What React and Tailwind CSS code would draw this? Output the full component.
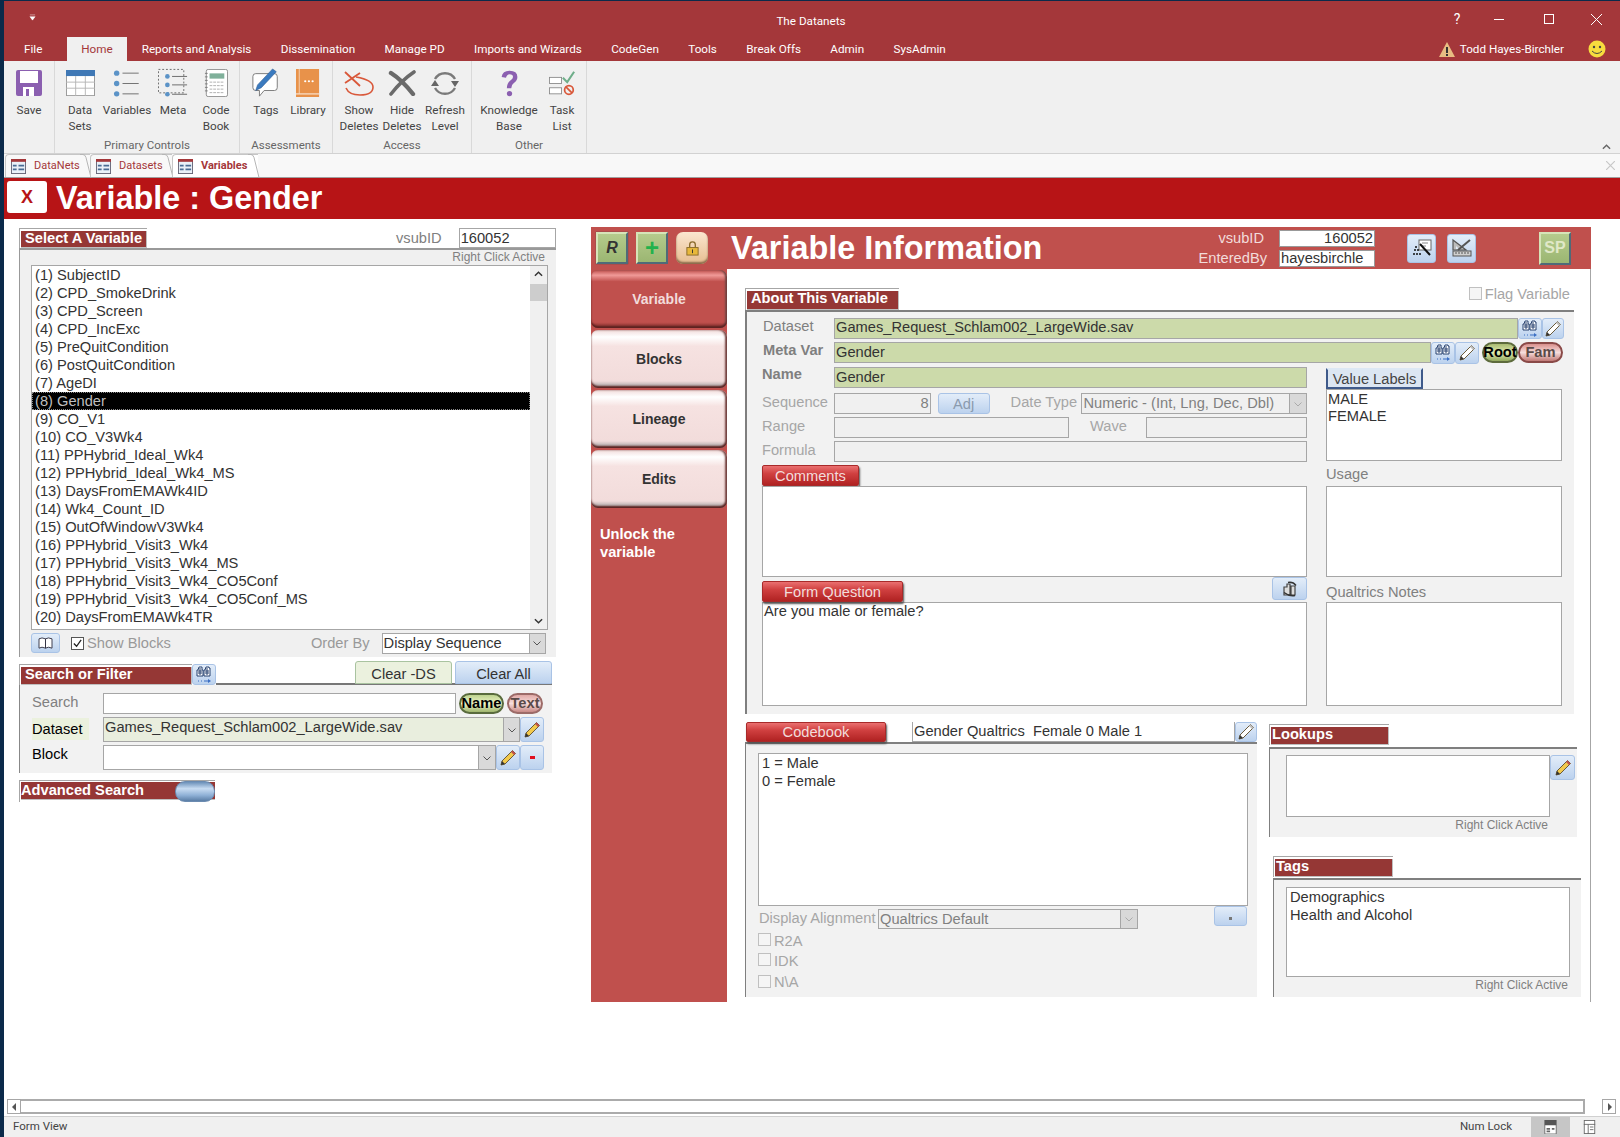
import React from "react";

const Bino = ({ className = "w-[18px] h-[18px]" }) => (
  <svg viewBox="0 0 18 18" className={className}>
    <path d="M4 1h3v3h1v6H2V4h1zM11 1h3v1h1v8H9V4h1z" fill="#fff" stroke="#26406e" strokeWidth="1" />
    <path d="M3 5h4M3 7h4M10 5h4M10 7h4M5 2v7M12 2v7" stroke="#26406e" strokeWidth="1" />
    <path d="M3 15h1M6 15h1M9 15h5" stroke="#3b6fc4" strokeWidth="1" />
    <path d="M13 13l3 2-3 2z" fill="#3b6fc4" />
  </svg>
);
const Pencil = ({ color = "#f2c94c", tip = "#c0504d", className = "w-[18px] h-[18px]" }) => (
  <svg viewBox="0 0 18 18" className={className}>
    <path d="M13.5 1.5l3 3L6 15l-4 1 1-4z" fill={color} stroke="#6a5a3a" strokeWidth="1" />
    <path d="M13.5 1.5l3 3-1.5 1.5-3-3z" fill={tip} />
    <path d="M3 12l3 3-4 1z" fill="#333" />
  </svg>
);
const GrayPencil = ({ className }) => <Pencil color="#ffffff" tip="#bfbfbf" className={className} />;
const Chev = ({ color = "#555" }) => (
  <svg viewBox="0 0 10 10" className="w-[10px] h-[10px]">
    <path d="M1.5 3.5L5 7l3.5-3.5" fill="none" stroke={color} strokeWidth="1" />
  </svg>
);
const BlueBtn = ({ className = "", children }) => (
  <div className={"flex items-center justify-center rounded-[3px] border border-[#a9c3e6] bg-linear-to-b from-[#e3edf9] to-[#bcd2ee] " + className}>
    {children}
  </div>
);
const Field = ({ className = "", children }) => (
  <div className={"border border-[#a6a6a6] overflow-hidden whitespace-nowrap px-[1px] " + className}>{children}</div>
);
const Arrow = ({ className = "", color }) => (
  <div className={"flex shrink-0 items-center justify-center bg-[#d9d9d9] border-l border-[#a6a6a6] " + className}>
    <Chev color={color} />
  </div>
);
const Title = ({ className = "", tpl = "pl-[4px]", children }) => (
  <div className={"shrink-0 border-t border-l border-[#a6a6a6] pt-[2px] pl-[1px] " + className}>
    <div className={"h-full bg-[#953735] text-white font-bold text-[14.67px] leading-[14px] border-r border-b border-[#bfbfbf] whitespace-nowrap " + tpl}>{children}</div>
  </div>
);
const RedBtn = ({ className = "", children }) => (
  <div className={"flex items-center justify-center rounded-[2px] text-[#f2dcdb] text-[14.67px] border border-[#a82a2a] bg-[linear-gradient(#ea7070,#d04040_40%,#b02222)] shadow-[1px_2px_2px_#555] " + className}>
    {children}
  </div>
);
const Pill = ({ className = "", children }) => (
  <div className={"flex items-center justify-center rounded-full font-bold text-[14.67px] leading-none border-2 " + className}>{children}</div>
);
const Check = ({ checked, className = "" }) => (
  <div className={"shrink-0 w-[13px] h-[13px] border flex items-center justify-center " + className}>
    {checked && (
      <svg viewBox="0 0 12 12" className="w-[11px] h-[11px]">
        <path d="M2 6l3 3 5-7" fill="none" stroke="#222" strokeWidth="1.4" />
      </svg>
    )}
  </div>
);

const RI = {
  save: (
    <svg viewBox="0 0 26 26" className="w-[26px] h-[26px]">
      <path d="M0 2q0-2 2-2h22q2 0 2 2v22q0 2-2 2H2q-2 0-2-2z" fill="#8b5fb0" />
      <rect x="4" y="1" width="18" height="12" fill="#fff" />
      <rect x="7" y="17" width="11" height="9" fill="#fff" />
      <rect x="10" y="19" width="3" height="7" fill="#8b5fb0" />
    </svg>
  ),
  table: (
    <svg viewBox="0 0 30 30" className="w-[29px] h-[26px]" preserveAspectRatio="none">
      <rect x="0.5" y="0.5" width="29" height="29" fill="#fff" stroke="#999" />
      <rect x="0" y="0" width="30" height="7" fill="#3f78b5" />
      <path d="M0 14h30M0 21h30M10 7v23M20 7v23" stroke="#b3b3b3" />
    </svg>
  ),
  list: (
    <svg viewBox="0 0 30 30" className="w-[28px] h-[27px]">
      <circle cx="3.5" cy="3.5" r="3" fill="#5b93c7" />
      <circle cx="3.5" cy="15" r="3" fill="#5b93c7" />
      <circle cx="3.5" cy="26.5" r="3" fill="#5b93c7" />
      <path d="M10 3.5h18M10 15h18M10 26.5h18" stroke="#666" />
    </svg>
  ),
  meta: (
    <svg viewBox="0 0 32 32" className="w-[30px] h-[30px]">
      <rect x="0.5" y="1.5" width="27" height="25" fill="none" stroke="#666" strokeDasharray="2 2" />
      <circle cx="10" cy="9" r="2.5" fill="#5b93c7" />
      <circle cx="10" cy="18" r="2.5" fill="#5b93c7" />
      <circle cx="10" cy="28" r="2.5" fill="#5b93c7" />
      <path d="M15 9h16M15 18h16M15 28h16" stroke="#666" />
    </svg>
  ),
  book: (
    <svg viewBox="0 0 26 32" className="w-[24px] h-[28px]" preserveAspectRatio="none">
      <rect x="2.5" y="0.5" width="23" height="31" rx="2" fill="#fff" stroke="#888" />
      <path d="M1 5h3M1 9h3M1 13h3M1 17h3M1 21h3M1 25h3" stroke="#777" />
      <rect x="6" y="5" width="16" height="6" fill="#7fb09a" />
      <path d="M6 15h16M6 19h16M6 23h16M6 27h16" stroke="#aaa" strokeDasharray="3 1" />
    </svg>
  ),
  tags: (
    <svg viewBox="0 0 32 32" className="w-[30px] h-[30px]">
      <path d="M5 6h20q3 0 3 3v12q0 3-3 3H14l-5 6v-6H5q-3 0-3-3V9q0-3 3-3z" fill="#fff" stroke="#777" />
      <path d="M23 1l4 3L11 21l-6 3 2-6z" fill="#3a7abf" stroke="#2a5a90" strokeWidth="0.6" />
    </svg>
  ),
  lib: (
    <svg viewBox="0 0 26 32" className="w-[24px] h-[28px]" preserveAspectRatio="none">
      <rect x="0" y="0" width="25" height="32" fill="#e8924a" />
      <rect x="3" y="0" width="1" height="28" fill="#fff" opacity="0.6" />
      <rect x="0" y="28" width="25" height="1" fill="#fff" />
      <circle cx="10" cy="14" r="1.2" fill="#fff" />
      <circle cx="14" cy="14" r="1.2" fill="#fff" />
      <circle cx="18" cy="14" r="1.2" fill="#fff" />
    </svg>
  ),
  show: (
    <svg viewBox="0 0 30 25" className="w-[30px] h-[25px]">
      <path d="M1 1l15 14M16 2L1 12" stroke="#d9583a" strokeWidth="1.8" fill="none" />
      <path d="M12 6Q29 9 29 16 29 24 16 24 5 24 2 17" stroke="#d9583a" strokeWidth="1.6" fill="none" />
    </svg>
  ),
  hide: (
    <svg viewBox="0 0 28 26" className="w-[28px] h-[26px]">
      <path d="M3 3Q14 10 25 24" stroke="#6a6a6a" strokeWidth="4.4" strokeLinecap="round" fill="none" />
      <path d="M26 2Q14 10 3 24" stroke="#6a6a6a" strokeWidth="3.6" strokeLinecap="round" fill="none" />
    </svg>
  ),
  refresh: (
    <svg viewBox="0 0 32 28" className="w-[32px] h-[28px]">
      <path d="M6 10a11.5 11.5 0 0 1 20 0" stroke="#7a7a7a" strokeWidth="2.4" fill="none" />
      <path d="M26 19a11.5 11.5 0 0 1-20 0" stroke="#7a7a7a" strokeWidth="2.4" fill="none" />
      <path d="M22 12l8 0-4 6zM2 17l8 0-4-6z" fill="#666" />
    </svg>
  ),
  help: (
    <svg viewBox="0 0 24 32" className="w-[21px] h-[28px]">
      <path d="M3 9q1-7 9-7 9 0 9 7 0 4-4 7-3 2-3 6h-5q0-6 4-9 3-2 3-4 0-3-4-3-3 0-4 4z" fill="#8b5fb0" />
      <circle cx="12" cy="28" r="3" fill="#8b5fb0" />
    </svg>
  ),
  task: (
    <svg viewBox="0 0 30 30" className="w-[28px] h-[26px]">
      <rect x="0.5" y="8.5" width="14" height="7" fill="#fff" stroke="#888" />
      <rect x="0.5" y="20.5" width="14" height="7" fill="#fff" stroke="#888" />
      <path d="M16 9l5 5 8-12" stroke="#6fae8a" strokeWidth="2.4" fill="none" />
      <circle cx="23" cy="23" r="5" fill="none" stroke="#d9583a" strokeWidth="2" />
      <path d="M19.5 19.5l7 7" stroke="#d9583a" strokeWidth="2" />
    </svg>
  ),
};

const RBtn = ({ w, icon, l1, l2 }) => (
  <div className={"flex flex-col items-center shrink-0 " + w}>
    <div className="flex items-center justify-center h-[40px] mt-[2px] -mb-[1px]">{icon}</div>
    <div className="text-center leading-[16px] whitespace-nowrap">
      {l1}
      <br />
      {l2 || "\u00a0"}
    </div>
  </div>
);
const RGroup = ({ w, pl, label, children }) => (
  <div className={"relative shrink-0 h-full border-r border-[#d9d9d9] " + w}>
    <div className={"flex " + pl}>{children}</div>
    <div className="absolute bottom-[1px] left-0 right-0 text-center text-[#666] text-[11.5px] leading-[14px] whitespace-nowrap">{label}</div>
  </div>
);
const MenuTab = ({ children }) => <div className="px-[14.7px] whitespace-nowrap">{children}</div>;
const DocIcon = () => (
  <svg viewBox="0 0 16 16" className="w-[15px] h-[15px] shrink-0">
    <rect x="0.5" y="0.5" width="15" height="15" fill="#eaf1f8" stroke="#667" />
    <rect x="0" y="0" width="16" height="3" fill="#a4373a" />
    <path d="M2 6h4v2H2zM2 10h4v2H2zM8 6h6v2H8zM8 10h6v2H8z" fill="#4a6c93" />
  </svg>
);
const DocTab = ({ w, bold, children }) => (
  <div className={"relative flex items-center gap-[8px] pl-[5px] h-[23px] border-l border-t border-[#c6c6c6] rounded-tl-[4px] text-[#a4373a] text-[11px] " + w + (bold ? " bg-white font-bold" : " bg-[#f8f8f8]")}>
    <DocIcon />
    <span>{children}</span>
    <svg viewBox="0 0 12 24" className="absolute right-[-2px] top-[-1px] w-[12px] h-[24px]" preserveAspectRatio="none">
      <path d="M0 .5h3q2 0 3 3l5 20" fill="none" stroke="#b5b5b5" />
    </svg>
  </div>
);

const vars = [
  "SubjectID","CPD_SmokeDrink","CPD_Screen","CPD_IncExc","PreQuitCondition","PostQuitCondition","AgeDI","Gender","CO_V1","CO_V3Wk4",
  "PPHybrid_Ideal_Wk4","PPHybrid_Ideal_Wk4_MS","DaysFromEMAWk4ID","Wk4_Count_ID","OutOfWindowV3Wk4","PPHybrid_Visit3_Wk4","PPHybrid_Visit3_Wk4_MS","PPHybrid_Visit3_Wk4_CO5Conf","PPHybrid_Visit3_Wk4_CO5Conf_MS","DaysFromEMAWk4TR",
];

const SideTab = ({ active, children }) => (
  <div
    className={
      "flex h-[58px] items-center justify-center rounded-[7px] font-bold text-[14px] shadow-[inset_0_-2px_2px_#5b2220,inset_-2px_0_2px_#7a4a48] " +
      (active
        ? "text-[#f2dcdb] bg-[linear-gradient(#c0504d_0,#f09a98_9%,#c0504d_20%,#c0504d_90%,#7d2c2a_100%)]"
        : "text-[#333] bg-[linear-gradient(#f2dcdb_0,#ffffff_12%,#f6e2e1_28%,#f2dcdb_88%,#999_100%)]")
    }
  >
    {children}
  </div>
);

export default function App() {
  return (
    <div className="w-[1620px] h-[1137px] overflow-hidden bg-white flex flex-col border-l-4 border-t border-[#0b2a4a] font-['Liberation_Sans',Arial,sans-serif] text-[14.67px] text-[#333] leading-[18px]">
      {/* Title bar */}
      <div className="h-[36px] shrink-0 bg-[#a4373a] text-white relative flex items-center justify-center font-['Roboto',sans-serif] text-[11.7px] pt-[3px]">
        <span className="ml-[-2px]">The Datanets</span>
        <div className="absolute left-[25px] top-[13px]">
          <svg viewBox="0 0 8 8" className="w-[7px] h-[7px]"><path d="M1 1h6M1 3h6l-3 4z" fill="#fff" stroke="#fff" strokeWidth="0.5" /></svg>
        </div>
        <div className="absolute right-[4px] top-[8px] flex items-center h-[20px]">
          <span className="w-[38px] text-center text-[14px]">?</span>
          <span className="w-[46px] flex justify-center"><span className="w-[10px] h-[1px] bg-white" /></span>
          <span className="w-[54px] flex justify-center"><span className="w-[10px] h-[10px] border border-white" /></span>
          <span className="w-[40px] flex justify-center">
            <svg viewBox="0 0 11 11" className="w-[11px] h-[11px]"><path d="M0 0l11 11M11 0L0 11" stroke="#fff" /></svg>
          </span>
        </div>
      </div>
      {/* Menu */}
      <div className="h-[24px] shrink-0 bg-[#a4373a] text-white flex items-center font-['Roboto',sans-serif] text-[11.7px]">
        <div className="w-[63px] pl-[20px]">File</div>
        <div className="w-[60px] h-full bg-[#f0f0f0] text-[#a4373a] flex items-center justify-center">Home</div>
        <MenuTab>Reports and Analysis</MenuTab>
        <MenuTab>Dissemination</MenuTab>
        <MenuTab>Manage PD</MenuTab>
        <MenuTab>Imports and Wizards</MenuTab>
        <MenuTab>CodeGen</MenuTab>
        <MenuTab>Tools</MenuTab>
        <MenuTab>Break Offs</MenuTab>
        <MenuTab>Admin</MenuTab>
        <MenuTab>SysAdmin</MenuTab>
        <div className="ml-auto flex items-center pr-[14px]">
          <svg viewBox="0 0 16 15" className="w-[16px] h-[15px]">
            <path d="M8 0l8 15H0z" fill="#e8bd82" />
            <path d="M7 5h2v6H7zM7 12h2v2H7z" fill="#333" />
          </svg>
          <span className="ml-[5px]">Todd Hayes-Birchler</span>
          <svg viewBox="0 0 18 18" className="ml-[24px] w-[18px] h-[18px]">
            <circle cx="9" cy="9" r="8.5" fill="#f7dc3e" />
            <circle cx="6" cy="7" r="1.2" fill="#444" />
            <circle cx="12" cy="7" r="1.2" fill="#444" />
            <path d="M4 11q5 5 10 0" fill="none" stroke="#444" />
          </svg>
        </div>
      </div>
      {/* Ribbon */}
      <div className="h-[93px] shrink-0 bg-[#f0f0f0] border-b border-[#d2d2d2] flex font-['Roboto',sans-serif] text-[11.7px] text-[#444] relative">
        <RGroup w="w-[51px]" pl="pl-[1px]" label="">
          <RBtn w="w-[48px]" icon={RI.save} l1="Save" />
        </RGroup>
        <RGroup w="w-[185px]" pl="pl-[1px]" label="Primary Controls">
          <RBtn w="w-[48px]" icon={RI.table} l1="Data" l2="Sets" />
          <RBtn w="w-[46px]" icon={RI.list} l1="Variables" />
          <RBtn w="w-[46px]" icon={RI.meta} l1="Meta" />
          <RBtn w="w-[40px]" icon={RI.book} l1="Code" l2="Book" />
        </RGroup>
        <RGroup w="w-[93px]" pl="pl-[4px]" label="Assessments">
          <RBtn w="w-[44px]" icon={RI.tags} l1="Tags" />
          <RBtn w="w-[40px]" icon={RI.lib} l1="Library" />
        </RGroup>
        <RGroup w="w-[139px]" pl="pl-[5px]" label="Access">
          <RBtn w="w-[42px]" icon={RI.show} l1="Show" l2="Deletes" />
          <RBtn w="w-[44px]" icon={RI.hide} l1="Hide" l2="Deletes" />
          <RBtn w="w-[42px]" icon={RI.refresh} l1="Refresh" l2="Level" />
        </RGroup>
        <RGroup w="w-[115px]" pl="pl-[9px]" label="Other">
          <RBtn w="w-[56px]" icon={RI.help} l1="Knowledge" l2="Base" />
          <RBtn w="w-[50px]" icon={RI.task} l1="Task" l2="List" />
        </RGroup>
        <div className="absolute right-[9px] bottom-[3px]">
          <svg viewBox="0 0 10 6" className="w-[9px] h-[6px]"><path d="M1 5l4-4 4 4" fill="none" stroke="#666" strokeWidth="1.6" /></svg>
        </div>
      </div>
      {/* Doc tabs */}
      <div className="h-[24px] shrink-0 bg-[#f8f8f8] border-b border-[#a0a0a0] flex items-start font-['Roboto',sans-serif] pl-[1px] relative">
        <DocTab w="w-[85px]">DataNets</DocTab>
        <DocTab w="w-[82px]">Datasets</DocTab>
        <DocTab w="w-[86px]" bold>Variables</DocTab>
        <div className="absolute right-[5px] top-[7px]">
          <svg viewBox="0 0 9 9" className="w-[9px] h-[9px]"><path d="M0 0l9 9M9 0L0 9" stroke="#c8c8c8" strokeWidth="1.2" /></svg>
        </div>
      </div>
      {/* Red band */}
      <div className="h-[41px] shrink-0 bg-[#b71416] flex items-start pl-[3px] pt-[3px]">
        <div className="w-[40px] h-[32px] bg-white rounded-[3px] flex items-center justify-center text-[#b71416] font-bold text-[18px]">X</div>
        <div className="ml-[9px] -mt-[1px] text-white font-bold text-[32.4px] leading-[36px]">Variable : Gender</div>
      </div>
      {/* Main */}
      <div className="flex-1 min-h-0 flex">
        {/* Left column */}
        <div className="w-[587px] shrink-0 pl-[15px] pt-[9px]">
          <div className="flex items-center h-[20px] w-[537px]">
            <Title className="w-[128px] h-[20px]">Select A Variable</Title>
            <div className="ml-[249px] text-[#808080]">vsubID</div>
            <Field className="ml-[17px] w-[97px] h-[20px] bg-white text-[#333] leading-[18px]">160052</Field>
          </div>
          <div className="w-[537px] h-[409px] bg-[#f0f0f0] border-t-2 border-l border-[#999] flex flex-col">
            <div className="h-[15px] shrink-0 text-right pr-[11px] text-[#808080] text-[12px] leading-[14px]">Right Click Active</div>
            <div className="ml-[11px] w-[517px] h-[365px] shrink-0 bg-white border border-[#a6a6a6] flex">
              <div className="flex-1 min-w-0">
                {vars.map((v, i) => (
                  <div key={v} className={"h-[18px] pl-[3px] leading-[18px] whitespace-nowrap" + (i === 7 ? " bg-black text-[#bfbfbf] outline-1 outline-dotted outline-[#888] -outline-offset-1" : "")}>
                    ({i + 1}) {v}
                  </div>
                ))}
              </div>
              <div className="w-[17px] shrink-0 bg-[#f0f0f0] flex flex-col items-center justify-between py-[5px] relative">
                <svg viewBox="0 0 10 6" className="w-[9px] h-[6px]"><path d="M1 5l4-4 4 4" fill="none" stroke="#333" strokeWidth="1.6" /></svg>
                <div className="absolute left-0 right-0 top-[18px] h-[17px] bg-[#cdcdcd]" />
                <svg viewBox="0 0 10 6" className="w-[9px] h-[6px]"><path d="M1 1l4 4 4-4" fill="none" stroke="#333" strokeWidth="1.6" /></svg>
              </div>
            </div>
            <div className="flex items-center h-[22px] mt-[2px] ml-[11px] w-[517px]">
              <BlueBtn className="w-[29px] h-[20px]">
                <svg viewBox="0 0 16 14" className="w-[15px] h-[13px]"><path d="M1 2q3-2 7 0v10q-4-2-7 0zM8 2q3-2 7 0v10q-4-2-7 0z" fill="#fff" stroke="#334" /></svg>
              </BlueBtn>
              <Check checked className="ml-[11px] bg-white border-[#555]" />
              <span className="ml-[3px] text-[#999]">Show Blocks</span>
              <span className="ml-[140px] text-[#999]">Order By</span>
              <div className="ml-[12px] w-[164px] h-[21px] border border-[#a6a6a6] bg-white flex">
                <div className="flex-1 px-[1px] leading-[19px] whitespace-nowrap">Display Sequence</div>
                <Arrow className="w-[16px]" />
              </div>
            </div>
          </div>

          {/* Search */}
          <div className="mt-[4px] flex items-end h-[24px] w-[533px]">
            <Title className="w-[173px] h-[21px]">Search or Filter</Title>
            <BlueBtn className="w-[24px] h-[21px] shrink-0"><Bino /></BlueBtn>
            <div className="flex-1 h-full border-b-2 border-[#777] flex items-start justify-end gap-[3px]">
              <div className="w-[97px] h-[23px] rounded-t-[3px] border border-[#a9c3a0] bg-[#ebf1de] flex items-center justify-center text-[#333] pt-[2px]">Clear -DS</div>
              <div className="w-[97px] h-[23px] rounded-t-[3px] border border-[#a9c3e6] bg-linear-to-b from-[#e3edf9] to-[#bcd2ee] flex items-center justify-center text-[#333] pt-[2px]">Clear All</div>
            </div>
          </div>
          <div className="w-[533px] h-[88px] bg-[#f2f2f2] border-l border-[#888] pl-[12px] pt-[8px]">
            <div className="flex h-[20px]">
              <div className="w-[71px] text-[#808080]">Search</div>
              <Field className="w-[353px] h-[21px] bg-white" />
              <Pill className="ml-[3px] w-[45px] h-[21px] border-[#596b3d] text-black bg-linear-to-b from-[#bcd28e] via-[#f0f5c8] to-[#9fb56d]">Name</Pill>
              <Pill className="ml-[3px] w-[36px] h-[21px] border-[#9c6b68] text-[#5a4a48] bg-linear-to-b from-[#e0a9a6] via-[#f6dedd] to-[#c88986]">Text</Pill>
            </div>
            <div className="flex mt-[4px] h-[25px]">
              <div className="w-[71px]"><div className="w-[57px] h-[22px] bg-[#ebf1de] text-black mt-[1px] leading-[22px]">Dataset</div></div>
              <div className="w-[417px] h-[25px] border border-[#a6a6a6] bg-[#e9eede] flex">
                <div className="flex-1 px-[1px] whitespace-nowrap">Games_Request_Schlam002_LargeWide.sav</div>
                <Arrow className="w-[16px]" />
              </div>
              <BlueBtn className="w-[24px] h-[25px]"><Pencil /></BlueBtn>
            </div>
            <div className="flex mt-[3px] h-[25px]">
              <div className="w-[71px] text-black">Block</div>
              <div className="w-[393px] h-[25px] border border-[#a6a6a6] bg-white flex justify-end">
                <Arrow className="w-[17px]" />
              </div>
              <BlueBtn className="w-[24px] h-[25px]"><Pencil /></BlueBtn>
              <BlueBtn className="w-[24px] h-[25px]"><span className="w-[5px] h-[3px] bg-[#e01020]" /></BlueBtn>
            </div>
          </div>
          <div className="mt-[7px] w-[196px] h-[22px] border-t border-l border-[#a6a6a6] pt-[1px] pl-[1px]">
            <div className="h-[18px] bg-[#953735] text-white font-bold text-[14.67px] leading-[17px] flex justify-between border-b border-[#bfbfbf]">
              <span>Advanced Search</span>
              <div className="w-[40px] h-[21px] -mt-[1px] rounded-[10px] border border-[#6b8bb0] bg-[linear-gradient(#6a8fb8,#c8dcf2_35%,#8fb0d6_70%,#5a7da5)]" />
            </div>
          </div>
        </div>

        {/* Right column */}
        <div className="pt-[8px] shrink-0">
          <div className="h-[42px] w-[1000px] bg-[#c0504d] flex items-center pl-[5px] text-white">
            <div className="w-[32px] h-[32px] flex items-center justify-center font-bold italic text-[#333] text-[16px] border-2 border-t-[#d6e4b8] border-l-[#d6e4b8] border-r-[#4f6a78] border-b-[#4f6a78] bg-linear-to-b from-[#b5cb8c] to-[#9bb672] shadow-[0_0_1px_#444]">R</div>
            <div className="ml-[8px] w-[32px] h-[32px] flex items-center justify-center font-bold text-[#22b24c] text-[24px] border-2 border-t-[#d6e4b8] border-l-[#d6e4b8] border-r-[#4f6a78] border-b-[#4f6a78] bg-linear-to-b from-[#b5cb8c] to-[#9bb672]">+</div>
            <div className="ml-[8px] w-[32px] h-[32px] flex items-center justify-center rounded-[7px] bg-linear-to-b from-[#fbe6cf] to-[#e6bd90] shadow-[inset_0_-2px_2px_#8a6a4a]">
              <svg viewBox="0 0 16 16" className="w-[15px] h-[15px]">
                <path d="M5 7V4q0-3 3-3t3 3v3" fill="none" stroke="#8a6a2a" strokeWidth="1.4" />
                <rect x="2" y="7" width="12" height="8" fill="#e8b83a" stroke="#8a6a2a" />
                <path d="M8 9v4" stroke="#333" />
              </svg>
            </div>
            <div className="ml-[23px] w-[492px] font-bold text-[32.4px] leading-none whitespace-nowrap">Variable Information</div>
            <div className="w-[41px] flex flex-col items-end text-[#f2dcdb] leading-[20px]">
              <div className="whitespace-nowrap">vsubID</div>
              <div className="whitespace-nowrap -mr-[3px]">EnteredBy</div>
            </div>
            <div className="ml-[15px] flex flex-col gap-[3px]">
              <div className="w-[96px] h-[17px] bg-white border border-[#999] text-right text-[#333] leading-[15px] pr-[1px]">160052</div>
              <div className="w-[96px] h-[17px] bg-white border border-[#999] text-[#333] leading-[14px] overflow-hidden pl-[1px]">hayesbirchle</div>
            </div>
            <BlueBtn className="ml-[32px] w-[29px] h-[29px]">
              <svg viewBox="0 0 20 20" className="w-[20px] h-[20px]">
                <rect x="7" y="2" width="12" height="10" fill="#fff" stroke="#666" />
                <path d="M10 5h6M10 8h4" stroke="#888" />
                <path d="M8 6l10 11" stroke="#111" strokeWidth="2" />
                <path d="M3 9h2M2 12h2M5 12h2M1 16h2M4 16h2M7 16h2" stroke="#111" strokeWidth="1.6" />
              </svg>
            </BlueBtn>
            <BlueBtn className="ml-[11px] w-[29px] h-[29px]">
              <svg viewBox="0 0 22 20" className="w-[22px] h-[20px]">
                <path d="M2 2l13 10H2z" fill="#bcbcbc" stroke="#555" strokeWidth="1.2" />
                <path d="M5 8l3 3H5z" fill="#e3edf9" />
                <path d="M7 12L19 2" stroke="#555" strokeWidth="2" />
                <rect x="2" y="13" width="18" height="5" fill="#d0d0d0" stroke="#555" />
                <path d="M5 14v2M8 14v2M11 14v2M14 14v2M17 14v2" stroke="#555" />
              </svg>
            </BlueBtn>
            <div className="ml-[63px] w-[32px] h-[33px] flex items-center justify-center font-bold text-[#e0e8c8] text-[16px] border-2 border-t-[#d6e4b8] border-l-[#d6e4b8] border-r-[#4f6a78] border-b-[#4f6a78] bg-linear-to-b from-[#b5cb8c] to-[#9bb672]">SP</div>
          </div>
          <div className="flex w-[1000px] h-[733px]">
            {/* Sidebar */}
            <div className="w-[136px] shrink-0 h-full bg-[#c0504d] pt-[1px]">
              <div className="flex flex-col gap-[2px]">
                <SideTab active>Variable</SideTab>
                <SideTab>Blocks</SideTab>
                <SideTab>Lineage</SideTab>
                <SideTab>Edits</SideTab>
              </div>
              <div className="mt-[17px] ml-[9px] text-white font-bold text-[14.67px] leading-[18px]">Unlock the<br />variable</div>
            </div>
            {/* Content */}
            <div className="w-[864px] border-r border-[#a6a6a6] pl-[18px] pt-[19px]">
              <div className="flex items-center h-[21px] w-[829px]">
                <Title className="w-[154px] h-[22px]">About This Variable</Title>
                <div className="ml-auto flex items-center text-[#a6a6a6] pr-[4px] -mt-[10px]">
                  <Check className="bg-[#f5f5f5] border-[#c0c0c0]" />
                  <span className="ml-[3px]">Flag Variable</span>
                </div>
              </div>
              <div className="w-[829px] h-[404px] mt-[1px] bg-[#f2f2f2] border-t-2 border-l-2 border-[#7f7f7f] pt-[6px] pl-[16px]">
                <div className="flex h-[21px]">
                  <div className="w-[71px] text-[#808080] -mt-[1px]">Dataset</div>
                  <Field className="w-[684px] h-[21px] bg-[#ccdaaa] leading-[17px]">Games_Request_Schlam002_LargeWide.sav</Field>
                  <BlueBtn className="w-[24px] h-[21px]"><Bino /></BlueBtn>
                  <BlueBtn className="w-[22px] h-[21px]"><GrayPencil /></BlueBtn>
                </div>
                <div className="flex h-[22px] mt-[3px]">
                  <div className="w-[71px] text-[#7f7f7f] font-bold -mt-[1px]">Meta Var</div>
                  <Field className="w-[597px] h-[21px] bg-[#ccdaaa] leading-[18px]">Gender</Field>
                  <BlueBtn className="w-[24px] h-[22px]"><Bino /></BlueBtn>
                  <BlueBtn className="w-[24px] h-[22px]"><GrayPencil /></BlueBtn>
                  <Pill className="ml-[3px] w-[36px] h-[21px] border-[#5d6b3d] text-black bg-linear-to-b from-[#a9bb72] via-[#e2ecb0] to-[#93a85e]">Root</Pill>
                  <Pill className="w-[45px] h-[21px] border-[#8a4a48] text-[#5a4a48] bg-linear-to-b from-[#d8908d] via-[#f6dedd] to-[#c07a77]">Fam</Pill>
                </div>
                <div className="flex mt-[3px]">
                  {/* form left */}
                  <div className="w-[545px] shrink-0 -ml-[1px]">
                    <div className="flex h-[21px]">
                      <div className="w-[72px] text-[#7f7f7f] font-bold -mt-[2px]">Name</div>
                      <Field className="w-[473px] h-[21px] bg-[#ccdaaa] leading-[18px]">Gender</Field>
                    </div>
                    <div className="flex h-[21px] mt-[5px] text-[#a6a6a6]">
                      <div className="w-[72px]">Sequence</div>
                      <Field className="w-[97px] h-[21px] bg-[#f0f0f0] text-right text-[#808080] leading-[18px]">8</Field>
                      <BlueBtn className="ml-[7px] w-[52px] h-[21px]"><span className="text-[#8a9aae]">Adj</span></BlueBtn>
                      <div className="ml-[21px] w-[71px] whitespace-nowrap">Date Type</div>
                      <div className="w-[226px] h-[21px] border border-[#a6a6a6] bg-[#f0f0f0] flex text-[#808080]">
                        <div className="flex-1 min-w-0 px-[1px] whitespace-nowrap overflow-hidden">Numeric - (Int, Lng, Dec, Dbl)</div>
                        <Arrow className="w-[17px]" color="#aaa" />
                      </div>
                    </div>
                    <div className="flex h-[21px] mt-[3px] text-[#a6a6a6]">
                      <div className="w-[72px]">Range</div>
                      <Field className="w-[235px] h-[21px] bg-[#f0f0f0]" />
                      <div className="ml-[21px] w-[56px]">Wave</div>
                      <Field className="w-[161px] h-[21px] bg-[#f0f0f0]" />
                    </div>
                    <div className="flex h-[21px] mt-[3px] text-[#a6a6a6]">
                      <div className="w-[72px]">Formula</div>
                      <Field className="w-[473px] h-[21px] bg-[#f0f0f0]" />
                    </div>
                    <RedBtn className="mt-[3px] w-[97px] h-[21px] pt-[1px]">Comments</RedBtn>
                    <div className="h-[91px] bg-white border border-[#a6a6a6]" />
                    <div className="flex items-end h-[25px]">
                      <RedBtn className="w-[141px] h-[21px]">Form Question</RedBtn>
                      <BlueBtn className="ml-auto mb-[2px] w-[35px] h-[23px]">
                        <svg viewBox="0 0 16 16" className="w-[16px] h-[16px]">
                          <path d="M5 3h3v11H2V6h3zM9 5h4v9H9z" fill="#ddd" stroke="#444" strokeWidth="1.2" />
                          <path d="M6 1.5q5-1 8 3M13 14.5q-6 1-11-3" fill="none" stroke="#333" strokeWidth="1.4" />
                        </svg>
                      </BlueBtn>
                    </div>
                    <div className="h-[104px] bg-white border border-[#a6a6a6] px-[1px] leading-[16px]">Are you male or female?</div>
                  </div>
                  {/* form right */}
                  <div className="ml-[19px] w-[236px] shrink-0">
                    <div className="mt-[1px] w-[97px] h-[21px] flex items-center justify-center border-2 border-t-[#dde8f4] border-l-[#3f5a8a] border-r-[#3f5a8a] border-b-[#3f5a8a] bg-[#dce6f2] text-[#444] whitespace-nowrap">Value Labels</div>
                    <div className="h-[72px] bg-white border border-[#a6a6a6] leading-[17px] text-[#333] px-[1px] pt-[1px]">MALE<br />FEMALE</div>
                    <div className="h-[25px] leading-[26px] text-[#808080]">Usage</div>
                    <div className="h-[91px] bg-white border border-[#a6a6a6]" />
                    <div className="h-[25px] leading-[30px] text-[#808080]">Qualtrics Notes</div>
                    <div className="h-[104px] bg-white border border-[#a6a6a6]" />
                  </div>
                </div>
              </div>
              {/* Bottom */}
              <div className="flex mt-[8px]">
                <div className="w-[512px] shrink-0">
                  <div className="flex h-[20px] items-start">
                    <RedBtn className="w-[140px] h-[20px] ml-[1px]">Codebook</RedBtn>
                    <Field className="ml-[26px] w-[323px] h-[20px] bg-white border-t-0 leading-[18px]">Gender Qualtrics&nbsp; Female 0 Male 1</Field>
                    <BlueBtn className="w-[22px] h-[20px]"><GrayPencil /></BlueBtn>
                  </div>
                  <div className="h-[255px] bg-[#f2f2f2] border-t-2 border-l border-[#7f7f7f] pl-[12px] pt-[9px]">
                    <div className="w-[490px] h-[153px] bg-white border border-[#a6a6a6] px-[3px]">1 = Male<br />0 = Female</div>
                    <div className="flex h-[23px]">
                      <div className="mt-[3px] ml-[1px] w-[119px] text-[#a6a6a6] whitespace-nowrap">Display Alignment</div>
                      <div className="mt-[3px] w-[260px] h-[20px] border border-[#a6a6a6] bg-[#f0f0f0] flex text-[#808080]">
                        <div className="flex-1 px-[1px] whitespace-nowrap">Qualtrics Default</div>
                        <Arrow className="w-[17px]" color="#aaa" />
                      </div>
                      <BlueBtn className="ml-[76px] w-[33px] h-[20px]"><span className="w-[3px] h-[3px] mt-[4px] bg-[#777]" /></BlueBtn>
                    </div>
                    <div className="flex items-center h-[20px] mt-[2px] text-[#a6a6a6]"><Check className="bg-[#f5f5f5] border-[#c0c0c0] -mt-[3px]" /><span className="ml-[3px]">R2A</span></div>
                    <div className="flex items-center h-[20px] text-[#a6a6a6]"><Check className="bg-[#f5f5f5] border-[#c0c0c0] -mt-[3px]" /><span className="ml-[3px]">IDK</span></div>
                    <div className="flex items-center h-[21px] text-[#a6a6a6]"><Check className="bg-[#f5f5f5] border-[#c0c0c0]" /><span className="ml-[3px]">N\A</span></div>
                  </div>
                </div>
                <div className="ml-[12px] w-[312px] shrink-0 pt-[2px]">
                  <div className="w-[308px]">
                    <Title className="w-[120px] h-[21px]" tpl="pl-[1px]">Lookups</Title>
                    <div className="mt-[2px] h-[90px] bg-[#f2f2f2] border-t-2 border-l border-[#7f7f7f] pl-[16px] pt-[6px]">
                      <div className="flex h-[62px]">
                        <div className="w-[264px] bg-white border border-[#a6a6a6]" />
                        <BlueBtn className="w-[25px] h-[25px]"><Pencil /></BlueBtn>
                      </div>
                      <div className="w-[264px] text-right text-[#808080] text-[12px] leading-[16px] pr-[2px]">Right Click Active</div>
                    </div>
                  </div>
                  <div className="w-[308px] ml-[4px] mt-[19px]">
                    <Title className="w-[120px] h-[21px]" tpl="pl-[1px]">Tags</Title>
                    <div className="mt-[1px] h-[119px] bg-[#f2f2f2] border-t-2 border-l border-[#7f7f7f] pl-[12px] pt-[7px]">
                      <div className="w-[284px] h-[90px] bg-white border border-[#a6a6a6] px-[3px]">Demographics<br />Health and Alcohol</div>
                      <div className="w-[284px] text-right text-[#808080] text-[12px] leading-[16px] pr-[2px]">Right Click Active</div>
                    </div>
                  </div>
                </div>
              </div>
            </div>
          </div>
        </div>
      </div>
      {/* Scrollbar */}
      <div className="h-[15px] shrink-0 flex pl-[3px] pr-[2px]">
        <div className="w-[14px] h-full border border-[#a6a6a6] flex items-center justify-center">
          <svg viewBox="0 0 5 8" className="w-[5px] h-[8px]"><path d="M4 0v8L0 4z" fill="#555" /></svg>
        </div>
        <div className="w-[1564px] h-full border-y-2 border-r-2 border-[#ababab]" />
        <div className="ml-[17px] w-[14px] h-full border border-[#a6a6a6] flex items-center justify-center">
          <svg viewBox="0 0 5 8" className="w-[5px] h-[8px]"><path d="M1 0v8l4-4z" fill="#555" /></svg>
        </div>
      </div>
      {/* Status */}
      <div className="h-[21px] mt-[2px] shrink-0 bg-[#f0f0f0] border-t border-[#d0d0d0] flex items-center font-['Roboto',sans-serif] text-[11.5px] text-[#444] pl-[9px]">
        <span className="-mt-[3px]">Form View</span>
        <span className="ml-auto mr-[19px] -mt-[2px]">Num Lock</span>
        <div className="w-[39px] h-full bg-[#c6c6c6] flex items-center justify-center">
          <svg viewBox="0 0 13 16" className="w-[13px] h-[14px]">
            <rect x="0" y="0" width="13" height="16" fill="#fff" stroke="#666" />
            <rect x="0" y="0" width="13" height="6" fill="#555" />
            <path d="M2 9h4v2H2zM2 12h4v2H2zM8 9h3v2H8z" fill="#666" />
          </svg>
        </div>
        <div className="w-[39px] h-full flex items-center justify-center mr-[11px]">
          <svg viewBox="0 0 13 16" className="w-[13px] h-[14px]">
            <rect x="0.5" y="0.5" width="12" height="15" fill="#fff" stroke="#666" />
            <path d="M0 5h13M5 5v11" stroke="#666" />
            <path d="M7 8h4M7 11h4" stroke="#666" />
          </svg>
        </div>
      </div>
    </div>
  );
}
